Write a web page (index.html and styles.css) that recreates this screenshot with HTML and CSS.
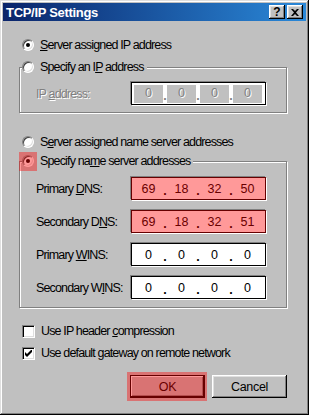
FILE: index.html
```html
<!DOCTYPE html>
<html lang="en">
<head>
    <meta charset="UTF-8">
    <title>TCP/IP Settings</title>
    <link rel="stylesheet" href="styles.css">
</head>
<body>
    <div class="window">
        <div class="titlebar">
            <span class="title">TCP/IP Settings</span>
            <div class="title-btns">
                <span class="tbtn help">?</span>
                <span class="tbtn close">
                    <svg width="8" height="7" viewBox="0 0 8 7"><path d="M0 0h2l2 2 2-2h2L5 3.5 8 7H6L4 5 2 7H0l3-3.5z" fill="#000"/></svg>
                </span>
            </div>
        </div>

        <div class="dialog">
            <div class="opt row-first"><span class="radio checked"></span><span><u>S</u>erver assigned IP address</span></div>

            <fieldset class="group group-ip">
                <legend class="opt"><span class="radio"></span><span>Specify an I<u>P</u> address</span></legend>
                <div class="field-row">
                    <span class="field-label off">IP <u>a</u>ddress:</span>
                    <div class="ipbox off">
                        <span class="seg">0</span><span class="dot">.</span><span class="seg">0</span><span class="dot">.</span><span class="seg">0</span><span class="dot">.</span><span class="seg">0</span>
                    </div>
                </div>
            </fieldset>

            <div class="opt row-ns"><span class="radio"></span><span>S<u>e</u>rver assigned name server addresses</span></div>

            <fieldset class="group group-ns">
                <legend class="opt"><span class="radio checked hl hl-radio"></span><span>Specify na<u>m</u>e server addresses</span></legend>
                <div class="field-row">
                    <span class="field-label">Primary <u>D</u>NS:</span>
                    <div class="ipbox hl">
                        <span class="seg">69</span><span class="dot">.</span><span class="seg">18</span><span class="dot">.</span><span class="seg">32</span><span class="dot">.</span><span class="seg">50</span>
                    </div>
                </div>
                <div class="field-row">
                    <span class="field-label">Secondary D<u>N</u>S:</span>
                    <div class="ipbox hl">
                        <span class="seg">69</span><span class="dot">.</span><span class="seg">18</span><span class="dot">.</span><span class="seg">32</span><span class="dot">.</span><span class="seg">51</span>
                    </div>
                </div>
                <div class="field-row">
                    <span class="field-label">Primary <u>W</u>INS:</span>
                    <div class="ipbox">
                        <span class="seg">0</span><span class="dot">.</span><span class="seg">0</span><span class="dot">.</span><span class="seg">0</span><span class="dot">.</span><span class="seg">0</span>
                    </div>
                </div>
                <div class="field-row">
                    <span class="field-label">Secondary W<u>I</u>NS:</span>
                    <div class="ipbox">
                        <span class="seg">0</span><span class="dot">.</span><span class="seg">0</span><span class="dot">.</span><span class="seg">0</span><span class="dot">.</span><span class="seg">0</span>
                    </div>
                </div>
            </fieldset>

            <div class="opt row-check"><span class="check"></span><span>Use IP header <u>c</u>ompression</span></div>
            <div class="opt row-check2">
                <span class="check">
                    <svg width="7" height="7" viewBox="0 0 7 7"><path d="M0 2v3l2 2 5-5V-1L2 4z" fill="#000"/></svg>
                </span>
                <span>Use default <u>g</u>ateway on remote network</span>
            </div>

            <div class="buttons">
                <button class="btn default hl hl-btn">OK</button>
                <button class="btn">Cancel</button>
            </div>
        </div>
    </div>
</body>
</html>
```

FILE: styles.css
```css
body {
    margin: 0;
    font-family: "Liberation Sans", Arial, sans-serif;
    font-size: 12px;
    color: #000;
    background: #c0c0c0;
}

.window {
    width: 309px;
    height: 415px;
    box-sizing: border-box;
    padding: 3px;
    background: #c0c0c0;
    box-shadow: inset -1px -1px #000, inset 1px 1px #dfdfdf, inset -2px -2px #808080, inset 2px 2px #fff;
}

/* title bar */
.titlebar {
    height: 18px;
    display: flex;
    align-items: center;
    justify-content: space-between;
    padding: 0 3px 0 3px;
    background: linear-gradient(90deg, #0a246a, #2a88d8);
}

.title {
    color: #fff;
    font-weight: bold;
    font-size: 13px;
    letter-spacing: -0.3px;
}

.title-btns {
    display: flex;
    gap: 2px;
}

.tbtn {
    width: 16px;
    height: 14px;
    box-sizing: border-box;
    display: flex;
    align-items: center;
    justify-content: center;
    background: #c0c0c0;
    box-shadow: inset -1px -1px #000, inset 1px 1px #fff, inset -2px -2px #808080, inset 2px 2px #dfdfdf;
    font-weight: bold;
    font-size: 12px;
    line-height: 1;
}

/* dialog body */
.dialog {
    padding: 16px 19px 0 16px;
}

.opt {
    display: flex;
    align-items: center;
    gap: 6px;
    height: 16px;
    padding-left: 3px;
    font-size: 12.5px;
    letter-spacing: -0.85px;
    white-space: nowrap;
}

legend.opt {
    margin-left: 2px;
    padding: 0 3px 0 0;
    background: #c0c0c0;
}

.row-ns { margin-top: 21px; }
.row-check { margin-top: 15px; }
.row-check2 { margin-top: 6px; }

.radio {
    position: relative;
    width: 12px;
    height: 12px;
    flex: none;
    box-sizing: border-box;
    border-radius: 50%;
    border: 1px solid;
    border-color: #808080 #fff #fff #808080;
    background: #fff;
    box-shadow: inset 1px 1px #404040, inset -1px -1px #dfdfdf;
}

.radio.checked::before {
    content: "";
    position: absolute;
    left: 3px;
    top: 3px;
    width: 4px;
    height: 4px;
    border-radius: 50%;
    background: #000;
}

.check {
    width: 13px;
    height: 13px;
    flex: none;
    box-sizing: border-box;
    display: flex;
    align-items: center;
    justify-content: center;
    border: 1px solid;
    border-color: #808080 #fff #fff #808080;
    background: #fff;
    box-shadow: inset 1px 1px #000, inset -1px -1px #dfdfdf;
}

/* group boxes */
.group {
    margin: 6px 0 0 0;
    padding: 0;
    min-width: 0;
    border: 1px solid #808080;
    box-shadow: inset 1px 1px #fff, 1px 1px #fff;
}

.group-ip { padding: 7px 0 7px 0; }
.group-ns {
    margin-top: 3px;
    padding: 8px 0 8px 0;
}

.field-row {
    display: flex;
    align-items: center;
    padding-left: 16px;
    height: 23px;
}

.field-row + .field-row { margin-top: 10px; }

.field-label {
    width: 95px;
    font-size: 12.5px;
    letter-spacing: -0.85px;
    white-space: nowrap;
}

.off {
    color: #808080;
    text-shadow: 1px 1px #fff;
}

.ipbox {
    position: relative;
    width: 135px;
    height: 23px;
    box-sizing: border-box;
    display: grid;
    grid-template-columns: 29px 4px 29px 4px 29px 4px 29px;
    align-items: center;
    padding: 0 2px;
    font-size: 12.5px;
    background: #fff;
    border: 1px solid #000;
    box-shadow: 1px 1px #fff, -1px -1px #808080;
}

.ipbox.off {
    padding: 2px;
    background: #fff;
}

.ipbox.off .seg {
    height: 100%;
    background: #c0c0c0;
    line-height: 17px;
}

.seg {
    text-align: center;
}

.dot {
    text-align: center;
    font-weight: bold;
    padding-top: 4px;
}

/* buttons */
.buttons {
    display: flex;
    justify-content: flex-end;
    gap: 7px;
    margin-top: 14px;
}

.btn {
    width: 75px;
    height: 23px;
    border: none;
    padding: 0;
    font-family: inherit;
    font-size: 12.5px;
    letter-spacing: -0.3px;
    color: #000;
    background: #c0c0c0;
    box-shadow: inset -1px -1px #000, inset 1px 1px #fff, inset -2px -2px #808080, inset 2px 2px #dfdfdf;
}

.btn.default {
    box-shadow: inset 0 0 0 1px #000, inset -2px -2px #000, inset 2px 2px #fff, inset -3px -3px #808080;
}

/* red highlight overlays */
.hl {
    position: relative;
}

.hl::after {
    content: "";
    position: absolute;
    inset: -1px;
    background: rgba(255, 0, 0, 0.4);
    pointer-events: none;
}

.hl-radio::after {
    inset: -4px -4px -5px -4px;
}

.hl-btn::after {
    inset: -3px -2px -3px -3px;
}
```
